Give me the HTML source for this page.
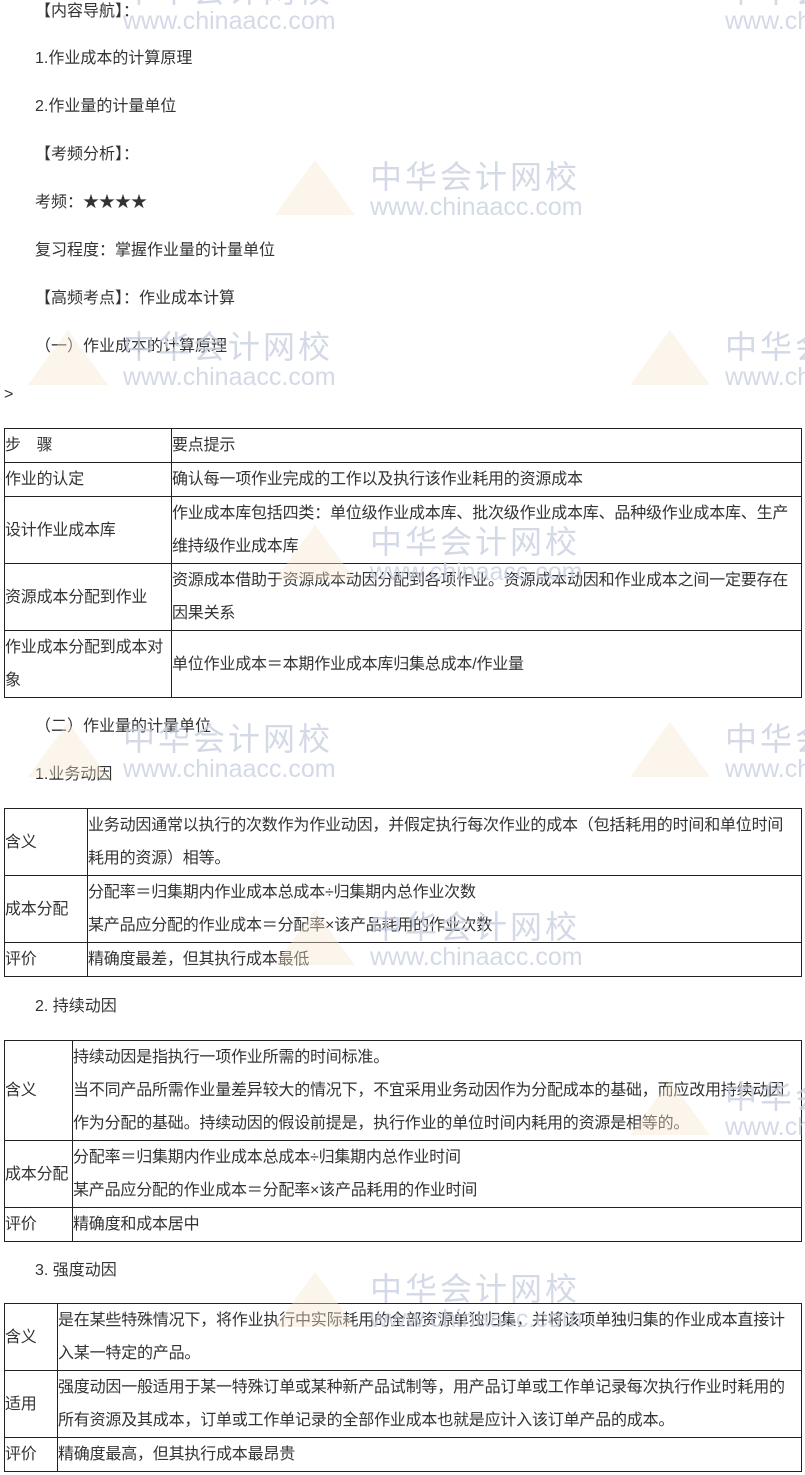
<!DOCTYPE html>
<html><head><meta charset="utf-8"><style>
body{margin:0;width:805px;height:1475px;position:relative;background:#fff;font-family:"Liberation Sans","Noto Sans CJK SC",sans-serif;font-size:16px;color:#333;overflow:hidden}
.p{position:absolute;left:35px;line-height:20px;white-space:nowrap}
table{position:absolute;left:4px;width:798px;border-collapse:collapse;font-size:16px;color:#333}
td{border:1.5px solid #222;padding:0;line-height:33px;vertical-align:middle;letter-spacing:-0.2px;white-space:nowrap;overflow:hidden}
.wm{position:absolute;color:#c9d0e0;opacity:.8;z-index:5;pointer-events:none}
.wm .a{font-size:32px;letter-spacing:3px;line-height:34px}
.wm .b{font-size:25px;line-height:26px;font-family:"Liberation Sans",sans-serif}
.wm .t{position:absolute;left:-95px;top:0;width:0;height:0;border-left:40px solid transparent;border-right:40px solid transparent;border-bottom:55px solid #f3e6cf;opacity:.5}
</style></head><body>
<div class="p" style="top:2px">【内容导航】：</div>
<div class="p" style="top:49px">1.作业成本的计算原理</div>
<div class="p" style="top:97px">2.作业量的计量单位</div>
<div class="p" style="top:145px">【考频分析】：</div>
<div class="p" style="top:193px">考频：★★★★</div>
<div class="p" style="top:241px">复习程度：掌握作业量的计量单位</div>
<div class="p" style="top:289px">【高频考点】：作业成本计算</div>
<div class="p" style="top:337px">（一）作业成本的计算原理</div>
<div class="p" style="top:385px;left:4px">&gt;</div>
<table style="top:428px">
<tr style="height:34px"><td style="width:166px">步　骤</td><td>要点提示</td></tr>
<tr style="height:33px"><td>作业的认定</td><td>确认每一项作业完成的工作以及执行该作业耗用的资源成本</td></tr>
<tr style="height:66px"><td>设计作业成本库</td><td>作业成本库包括四类：单位级作业成本库、批次级作业成本库、品种级作业成本库、生产<br>维持级作业成本库</td></tr>
<tr style="height:67px"><td>资源成本分配到作业</td><td>资源成本借助于资源成本动因分配到各项作业。资源成本动因和作业成本之间一定要存在<br>因果关系</td></tr>
<tr style="height:64px"><td>作业成本分配到成本对<br>象</td><td>单位作业成本＝本期作业成本库归集总成本/作业量</td></tr>
</table>
<div class="p" style="top:717px">（二）作业量的计量单位</div>
<div class="p" style="top:765px">1.业务动因</div>
<table style="top:808px">
<tr style="height:65px"><td style="width:82px">含义</td><td>业务动因通常以执行的次数作为作业动因，并假定执行每次作业的成本（包括耗用的时间和单位时间<br>耗用的资源）相等。</td></tr>
<tr style="height:67px"><td>成本分配</td><td>分配率＝归集期内作业成本总成本÷归集期内总作业次数<br>某产品应分配的作业成本＝分配率×该产品耗用的作业次数</td></tr>
<tr style="height:33px"><td>评价</td><td>精确度最差，但其执行成本最低</td></tr>
</table>
<div class="p" style="top:997px">2. 持续动因</div>
<table style="top:1040px">
<tr style="height:97px"><td style="width:67px">含义</td><td>持续动因是指执行一项作业所需的时间标准。<br>当不同产品所需作业量差异较大的情况下，不宜采用业务动因作为分配成本的基础，而应改用持续动因<br>作为分配的基础。持续动因的假设前提是，执行作业的单位时间内耗用的资源是相等的。</td></tr>
<tr style="height:66px"><td>成本分配</td><td>分配率＝归集期内作业成本总成本÷归集期内总作业时间<br>某产品应分配的作业成本＝分配率×该产品耗用的作业时间</td></tr>
<tr style="height:34px"><td>评价</td><td>精确度和成本居中</td></tr>
</table>
<div class="p" style="top:1261px">3. 强度动因</div>
<table style="top:1303px">
<tr style="height:66px"><td style="width:52px">含义</td><td>是在某些特殊情况下，将作业执行中实际耗用的全部资源单独归集，并将该项单独归集的作业成本直接计<br>入某一特定的产品。</td></tr>
<tr style="height:67px"><td>适用</td><td>强度动因一般适用于某一特殊订单或某种新产品试制等，用产品订单或工作单记录每次执行作业时耗用的<br>所有资源及其成本，订单或工作单记录的全部作业成本也就是应计入该订单产品的成本。</td></tr>
<tr style="height:33px"><td>评价</td><td>精确度最高，但其执行成本最昂贵</td></tr>
</table>
<div class="wm" style="left:123px;top:-26px"><div class="a">中华会计网校</div><div class="b">www.chinaacc.com</div></div>
<div class="wm" style="left:725px;top:-26px"><div class="a">中华会计网校</div><div class="b">www.chinaacc.com</div></div>
<div class="wm" style="left:370px;top:160px"><div class="t"></div><div class="a">中华会计网校</div><div class="b">www.chinaacc.com</div></div>
<div class="wm" style="left:123px;top:330px"><div class="t"></div><div class="a">中华会计网校</div><div class="b">www.chinaacc.com</div></div>
<div class="wm" style="left:725px;top:330px"><div class="t"></div><div class="a">中华会计网校</div><div class="b">www.chinaacc.com</div></div>
<div class="wm" style="left:370px;top:525px"><div class="t"></div><div class="a">中华会计网校</div><div class="b">www.chinaacc.com</div></div>
<div class="wm" style="left:123px;top:722px"><div class="t"></div><div class="a">中华会计网校</div><div class="b">www.chinaacc.com</div></div>
<div class="wm" style="left:725px;top:722px"><div class="t"></div><div class="a">中华会计网校</div><div class="b">www.chinaacc.com</div></div>
<div class="wm" style="left:370px;top:910px"><div class="t"></div><div class="a">中华会计网校</div><div class="b">www.chinaacc.com</div></div>
<div class="wm" style="left:725px;top:1080px"><div class="t"></div><div class="a">中华会计网校</div><div class="b">www.chinaacc.com</div></div>
<div class="wm" style="left:370px;top:1272px"><div class="t"></div><div class="a">中华会计网校</div><div class="b">www.chinaacc.com</div></div>
</body></html>
